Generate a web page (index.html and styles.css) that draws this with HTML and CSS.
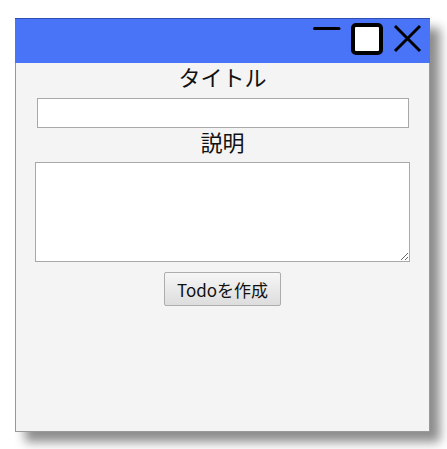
FILE: index.html
```html
<!DOCTYPE html>
<html lang="ja">
<head>
<meta charset="utf-8">
<link rel="stylesheet" href="styles.css">
</head>
<body>
<div class="window">
  <div class="titlebar">
    <svg class="ctl" width="120" height="44" viewBox="0 0 120 44">
      <line x1="11.5" y1="10.5" x2="36" y2="10.5" stroke="#000" stroke-width="3" stroke-linecap="round"/>
      <rect x="50" y="7" width="28" height="28" rx="3" fill="#fff" stroke="#000" stroke-width="4"/>
      <path d="M92 8 L117 33 M117 8 L92 33" stroke="#000" stroke-width="3" fill="none"/>
    </svg>
  </div>
  <form class="content">
    <label class="label first" for="t">タイトル</label>
    <input id="t" class="field" type="text">
    <label class="label" for="d">説明</label>
    <textarea id="d" class="area"></textarea>
    <button class="btn" type="button">Todoを作成</button>
  </form>
</div>
</body>
</html>
```
FILE: styles.css
```css
html, body {
  margin: 0;
  background: #fff;
}
body {
  padding: 18px 0 20px 15px;
  min-height: 449px;
  box-sizing: border-box;
  font-family: "Noto Sans CJK JP", "Noto Sans", sans-serif;
}
.window {
  width: 415px;
  height: 414px;
  box-sizing: border-box;
  border: 1px solid #999;
  border-top-color: #2f4fb5;
  background: #f4f4f4;
  box-shadow: 10px 10px 10px rgba(0, 0, 0, 0.45);
  display: flex;
  flex-direction: column;
}
.titlebar {
  background: #4a74f8;
  display: flex;
  justify-content: flex-end;
  margin: -1px -1px 0 -1px;
  border-top: 1px solid #2f4fb5;
  box-sizing: border-box;
  height: 45px;
}
.ctl {
  display: block;
  margin-right: 7px;
  margin-top: -1px;
}
.content {
  display: flex;
  flex-direction: column;
  align-items: center;
  margin: 0;
}
.label {
  font-size: 22px;
  line-height: 27px;
  color: #111;
  height: 34px;
}
.label.first {
  height: 35px;
}
.field {
  box-sizing: border-box;
  width: 372px;
  height: 30px;
  margin: 0;
  border: 1px solid #a9a9a9;
  background: #fff;
  padding: 0 2px;
}
.area {
  box-sizing: border-box;
  width: 375px;
  height: 100px;
  margin: 0;
  border: 1px solid #a9a9a9;
  background: #fff;
  resize: both;
}
.btn {
  margin-top: 10px;
  box-sizing: border-box;
  width: 117px;
  height: 34px;
  font-family: "Noto Sans CJK JP", "Noto Sans", sans-serif;
  font-size: 17px;
  color: #111;
  border: 1px solid #adadad;
  border-radius: 2px;
  background: linear-gradient(#f6f6f6, #dddddd);
  padding: 0;
}
```
